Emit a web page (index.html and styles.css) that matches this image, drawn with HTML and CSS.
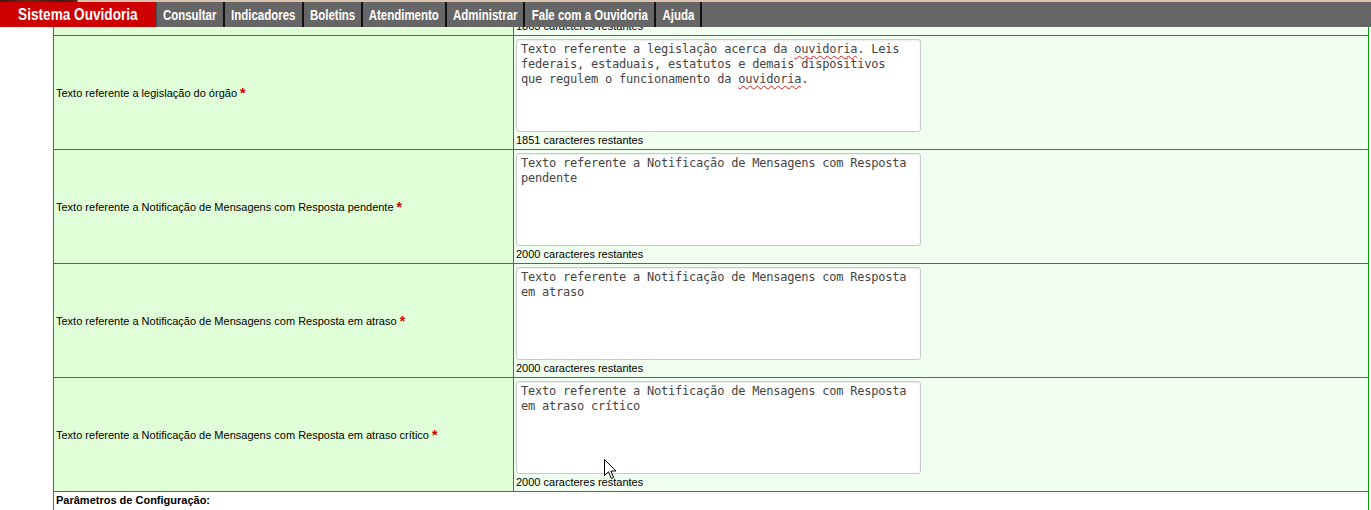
FILE: index.html
```html
<!DOCTYPE html>
<html lang="pt-BR">
<head>
<meta charset="utf-8">
<title>Sistema Ouvidoria</title>
<link rel="stylesheet" href="styles.css">
</head>
<body>
<header class="topbar">
  <div class="strip"></div>
  <nav class="menu">
    <span class="brand"><span class="narrow">Sistema Ouvidoria</span></span>
    <a class="item w-consultar"><span class="narrow">Consultar</span></a>
    <a class="item w-indicadores"><span class="narrow">Indicadores</span></a>
    <a class="item w-boletins"><span class="narrow">Boletins</span></a>
    <a class="item w-atendimento"><span class="narrow">Atendimento</span></a>
    <a class="item w-administrar"><span class="narrow">Administrar</span></a>
    <a class="item w-fale"><span class="narrow">Fale com a Ouvidoria</span></a>
    <a class="item w-ajuda"><span class="narrow">Ajuda</span></a>
  </nav>
</header>

<main class="form">
  <div class="row">
    <div class="label">Texto referente a apresentação da ouvidoria <span class="req">*</span></div>
    <div class="value">
      <div class="textarea">Texto referente a apresentação da ouvidoria.</div>
      <div class="counter">1863 caracteres restantes</div>
    </div>
  </div>
  <div class="row">
    <div class="label">Texto referente a legislação do órgão <span class="req">*</span></div>
    <div class="value">
      <div class="textarea">Texto referente a legislação acerca da <span class="spell">ouvidoria</span>. Leis federais, estaduais, estatutos e demais dispositivos que regulem o funcionamento da <span class="spell">ouvidoria</span>.</div>
      <div class="counter">1851 caracteres restantes</div>
    </div>
  </div>
  <div class="row">
    <div class="label">Texto referente a Notificação de Mensagens com Resposta pendente <span class="req">*</span></div>
    <div class="value">
      <div class="textarea">Texto referente a Notificação de Mensagens com Resposta pendente</div>
      <div class="counter">2000 caracteres restantes</div>
    </div>
  </div>
  <div class="row">
    <div class="label">Texto referente a Notificação de Mensagens com Resposta em atraso <span class="req">*</span></div>
    <div class="value">
      <div class="textarea">Texto referente a Notificação de Mensagens com Resposta em atraso</div>
      <div class="counter">2000 caracteres restantes</div>
    </div>
  </div>
  <div class="row">
    <div class="label">Texto referente a Notificação de Mensagens com Resposta em atraso crítico <span class="req">*</span></div>
    <div class="value">
      <div class="textarea">Texto referente a Notificação de Mensagens com Resposta em atraso crítico</div>
      <div class="counter">2000 caracteres restantes</div>
    </div>
  </div>
  <div class="section">Parâmetros de Configuração:</div>
</main>

<svg class="cursor" width="13" height="21" viewBox="0 0 13 21" aria-hidden="true">
  <path d="M0.5 0.5 L0.5 16.5 L4.5 12.8 L7.3 19.5 L9.6 18.5 L6.9 12 L12 12 Z" fill="#fff" stroke="#000" stroke-width="1" stroke-linejoin="miter"/>
</svg>
</body>
</html>
```

FILE: styles.css
```css
html, body {
  margin: 0;
  padding: 0;
  background: #fff;
}

body {
  font-family: "Liberation Sans", Arial, sans-serif;
  font-size: 11px;
  color: #000;
  overflow: hidden;
}

.topbar {
  position: fixed;
  top: 0;
  left: 0;
  right: 0;
  z-index: 10;
}

.strip {
  height: 2px;
  background: linear-gradient(to right, #3e1710 0, #6a2a1d 30px, #3a1a12 60px, #5a2418 77px, #dcc3ad 78px, #dcc3ad 100%);
}

.menu {
  display: flex;
  height: 25px;
  overflow: hidden;
  background: #666;
  font-family: "Liberation Sans", Arial, sans-serif;
  font-weight: bold;
  color: #fff;
}

.narrow {
  display: inline-block;
  transform: scaleX(0.82);
  transform-origin: center;
  white-space: nowrap;
}

.brand {
  width: 156px;
  flex: none;
  display: flex;
  justify-content: center;
  background: #cc0000;
  border-right: 1px solid #4a4a4a;
  font-size: 16.6px;
  line-height: 26px;
}

.item {
  flex: none;
  display: flex;
  justify-content: center;
  border-right: 2px solid #111;
  font-size: 14px;
  line-height: 26px;
  color: #fff;
  text-decoration: none;
}

.w-consultar { width: 66px; }
.w-indicadores { width: 77px; }
.w-boletins { width: 57px; }
.w-atendimento { width: 82px; }
.w-administrar { width: 76px; }
.w-fale { width: 129px; }
.w-ajuda { width: 44px; }

.form {
  margin: -79px 0 0 53px;
  width: 1316px;
  box-sizing: border-box;
  border: 1px solid #119911;
  border-bottom: 0;
}

.row {
  display: grid;
  grid-template-columns: 460px 1fr;
  border-bottom: 1px solid #119911;
}

.label {
  box-sizing: border-box;
  display: flex;
  align-items: center;
  padding: 0 2px;
  background: #e0ffd8;
  border-right: 1px solid #119911;
  white-space: pre;
}

.req {
  color: #cc0000;
  font-weight: bold;
  font-size: 14px;
}

.value {
  background: #f0fff0;
  padding: 3px 2px 1px;
}

.textarea {
  box-sizing: border-box;
  width: 405px;
  height: 93px;
  padding: 2px 12px 2px 4px;
  background: #fff;
  border: 1px solid #c9c9c9;
  border-radius: 3px;
  box-shadow: inset 0 1px 2px rgba(0, 0, 0, 0.08);
  font-family: "DejaVu Sans Mono", "Liberation Mono", monospace;
  font-size: 12px;
  letter-spacing: -0.22px;
  line-height: 15px;
  color: #454545;
  overflow: hidden;
}

.spell {
  text-decoration: underline wavy #e02020;
  text-decoration-thickness: 1px;
  text-underline-offset: 2px;
}

.counter {
  line-height: 16px;
  white-space: nowrap;
}

.section {
  padding: 2px 2px 20px;
  font-weight: bold;
  background: #fff;
}

.cursor {
  position: absolute;
  left: 604px;
  top: 459px;
  z-index: 20;
}
```
